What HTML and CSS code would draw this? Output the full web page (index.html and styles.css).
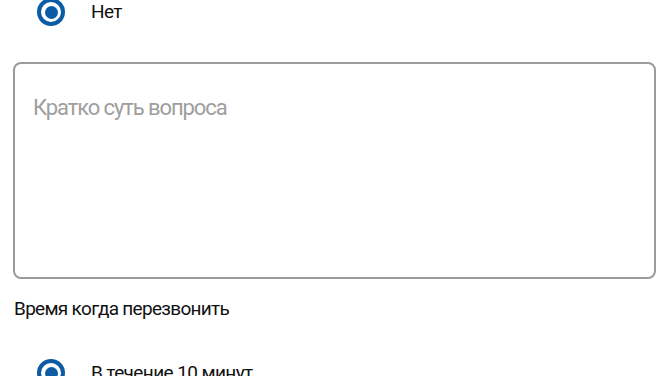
FILE: index.html
```html
<!DOCTYPE html>
<html lang="ru">
<head>
<meta charset="utf-8">
<title>Форма</title>
<link rel="stylesheet" href="styles.css">
</head>
<body>
<form class="form">
  <label class="radio-row">
    <input class="radio" type="radio" name="answer" checked>
    <span class="radio-text">Нет</span>
  </label>
  <textarea class="question" placeholder="Кратко суть вопроса"></textarea>
  <div class="field-label">Время когда перезвонить</div>
  <label class="radio-row radio-row-time">
    <input class="radio" type="radio" name="time" checked>
    <span class="radio-text">В течение 10 минут</span>
  </label>
</form>
</body>
</html>
```
FILE: styles.css
```css
html, body {
  margin: 0;
  padding: 0;
  background: #ffffff;
  overflow: hidden;
}
body {
  font-family: Roboto, "Liberation Sans", sans-serif;
  color: #111111;
}
.form {
  display: flex;
  flex-direction: column;
  padding: 0 14px 0 13px;
  margin-top: -12px;
}
.radio-row {
  display: flex;
  align-items: center;
  height: 48px;
  padding-left: 24px;
  gap: 26px;
}
.radio {
  appearance: none;
  -webkit-appearance: none;
  margin: 0;
  width: 28px;
  height: 28px;
  border: 4px solid #0b5ca5;
  border-radius: 50%;
  box-sizing: border-box;
  display: grid;
  place-items: center;
  flex: none;
}
.radio:checked::before {
  content: "";
  width: 13px;
  height: 13px;
  border-radius: 50%;
  background: #0b5ca5;
}
.radio-text {
  font-size: 19px;
  line-height: 24px;
  letter-spacing: -0.6px;
}
.question {
  margin-top: 26px;
  height: 217px;
  box-sizing: border-box;
  border: 2px solid #9b9b9b;
  border-radius: 8px;
  padding: 30px 18px 10px 18px;
  font-family: inherit;
  font-size: 22px;
  line-height: 28px;
  letter-spacing: -1.1px;
  resize: none;
  outline: none;
  color: #111;
}
.question::placeholder {
  color: #9e9e9e;
}
.field-label {
  margin-top: 18px;
  font-size: 19px;
  line-height: 24px;
  letter-spacing: -0.7px;
  padding-left: 1px;
}
.radio-row-time {
  margin-top: 28px;
}
```
